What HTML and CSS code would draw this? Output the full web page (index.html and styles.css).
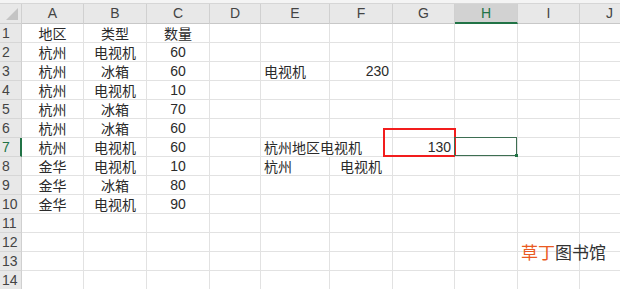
FILE: index.html
```html
<!DOCTYPE html>
<html lang="zh">
<head>
<meta charset="utf-8">
<link rel="stylesheet" href="styles.css">
</head>
<body>
<div class="sheet">
  <div class="topbar"></div>
  <div class="grid">
    <div class="hd corner"><span class="tri"></span></div>
    <div class="hd col">A</div><div class="hd col">B</div><div class="hd col">C</div><div class="hd col">D</div><div class="hd col">E</div><div class="hd col">F</div><div class="hd col">G</div><div class="hd col sel">H</div><div class="hd col">I</div><div class="hd col">J</div>

    <div class="hd row">1</div><div class="c ctr">地区</div><div class="c ctr">类型</div><div class="c ctr">数量</div><div class="c"></div><div class="c"></div><div class="c"></div><div class="c"></div><div class="c"></div><div class="c"></div><div class="c"></div>
    <div class="hd row">2</div><div class="c ctr">杭州</div><div class="c ctr">电视机</div><div class="c ctr num">60</div><div class="c"></div><div class="c"></div><div class="c"></div><div class="c"></div><div class="c"></div><div class="c"></div><div class="c"></div>
    <div class="hd row">3</div><div class="c ctr">杭州</div><div class="c ctr">冰箱</div><div class="c ctr num">60</div><div class="c"></div><div class="c lft">电视机</div><div class="c rgt num">230</div><div class="c"></div><div class="c"></div><div class="c"></div><div class="c"></div>
    <div class="hd row">4</div><div class="c ctr">杭州</div><div class="c ctr">电视机</div><div class="c ctr num">10</div><div class="c"></div><div class="c"></div><div class="c"></div><div class="c"></div><div class="c"></div><div class="c"></div><div class="c"></div>
    <div class="hd row">5</div><div class="c ctr">杭州</div><div class="c ctr">冰箱</div><div class="c ctr num">70</div><div class="c"></div><div class="c"></div><div class="c"></div><div class="c"></div><div class="c"></div><div class="c"></div><div class="c"></div>
    <div class="hd row">6</div><div class="c ctr">杭州</div><div class="c ctr">冰箱</div><div class="c ctr num">60</div><div class="c"></div><div class="c"></div><div class="c"></div><div class="c"></div><div class="c"></div><div class="c"></div><div class="c"></div>
    <div class="hd row rsel">7</div><div class="c ctr">杭州</div><div class="c ctr">电视机</div><div class="c ctr num">60</div><div class="c"></div><div class="c lft over">杭州地区电视机</div><div class="c"></div><div class="c rgt num mark">130<span class="redbox"></span></div><div class="c active"><span class="selbox"><span class="handle"></span></span></div><div class="c"></div><div class="c"></div>
    <div class="hd row">8</div><div class="c ctr">金华</div><div class="c ctr">电视机</div><div class="c ctr num">10</div><div class="c"></div><div class="c lft">杭州</div><div class="c ctr">电视机</div><div class="c"></div><div class="c"></div><div class="c"></div><div class="c"></div>
    <div class="hd row">9</div><div class="c ctr">金华</div><div class="c ctr">冰箱</div><div class="c ctr num">80</div><div class="c"></div><div class="c"></div><div class="c"></div><div class="c"></div><div class="c"></div><div class="c"></div><div class="c"></div>
    <div class="hd row">10</div><div class="c ctr">金华</div><div class="c ctr">电视机</div><div class="c ctr num">90</div><div class="c"></div><div class="c"></div><div class="c"></div><div class="c"></div><div class="c"></div><div class="c"></div><div class="c"></div>
    <div class="hd row">11</div><div class="c"></div><div class="c"></div><div class="c"></div><div class="c"></div><div class="c"></div><div class="c"></div><div class="c"></div><div class="c"></div><div class="c"></div><div class="c"></div>
    <div class="hd row">12</div><div class="c"></div><div class="c"></div><div class="c"></div><div class="c"></div><div class="c"></div><div class="c"></div><div class="c"></div><div class="c"></div><div class="c"></div><div class="c"></div>
    <div class="hd row">13</div><div class="c"></div><div class="c"></div><div class="c"></div><div class="c"></div><div class="c"></div><div class="c"></div><div class="c"></div><div class="c"></div><div class="c"></div><div class="c"></div>
    <div class="hd row">14</div><div class="c"></div><div class="c"></div><div class="c"></div><div class="c"></div><div class="c"></div><div class="c"></div><div class="c"></div><div class="c"></div><div class="c"></div><div class="c"></div>
  </div>
  <div class="watermark"><span class="wm-red">草丁</span>图书馆</div>
</div>
</body>
</html>
```

FILE: styles.css
```css
html, body {
  margin: 0;
  padding: 0;
  background: #ffffff;
}
.sheet {
  position: relative;
  width: 620px;
  height: 289px;
  overflow: hidden;
  font-family: "Noto Sans CJK SC", "Liberation Sans", sans-serif;
  font-size: 14px;
  color: #2b2b2b;
}
.topbar {
  height: 3px;
  background: #f4f4f4;
  border-bottom: 1px solid #d6d6d6;
}
.grid {
  display: grid;
  grid-template-columns: 22px 62px 63px 63px 51px 69px 63px 62px 63px 62px 60px;
  grid-template-rows: 20px;
  grid-auto-rows: 19px;
  width: 640px;
}
.hd {
  box-sizing: border-box;
  background: #e8e8e8;
  color: #444;
  font-family: "Liberation Sans", sans-serif;
  font-size: 14px;
  line-height: 19px;
  border-right: 1px solid #d0d0d0;
  border-bottom: 1px solid #d0d0d0;
}
.corner {
  position: relative;
}
.tri {
  position: absolute;
  right: 3px;
  bottom: 3px;
  width: 0;
  height: 0;
  border-left: 12px solid transparent;
  border-bottom: 12px solid #c4c4c4;
}
.col {
  text-align: center;
  border-bottom: 1px solid #c8c8c8;
}
.col.sel {
  background: #d2d2d2;
  color: #217346;
  border-bottom: 2px solid #217346;
}
.row {
  padding-left: 2px;
  text-align: left;
  border-bottom: 1px solid #d6d6d6;
}
.row.rsel {
  color: #217346;
  border-right: 2px solid #217346;
}
.c {
  box-sizing: border-box;
  border-right: 1px solid #e2e2e2;
  border-bottom: 1px solid #e2e2e2;
  line-height: 19px;
  white-space: nowrap;
  padding: 0 3px;
  position: relative;
}
.ctr { text-align: center; }
.lft { text-align: left; }
.rgt { text-align: right; }
.num {
  font-family: "Liberation Sans", sans-serif;
  font-size: 14px;
}
.over {
  overflow: visible;
  border-right-color: transparent;
  z-index: 1;
}
.redbox {
  position: absolute;
  left: -10px;
  top: -10px;
  right: -2px;
  bottom: -1px;
  border: 2px solid #f21d1d;
  box-sizing: border-box;
}
.selbox {
  position: absolute;
  left: -1px;
  top: -1px;
  right: 0;
  bottom: 0;
  border: 1px solid #3d6e52;
  box-sizing: border-box;
}
.handle {
  position: absolute;
  right: -2px;
  bottom: -2px;
  width: 3px;
  height: 3px;
  background: #217346;
}
.watermark {
  position: absolute;
  left: 521px;
  top: 241px;
  font-size: 17px;
  line-height: 22px;
  color: #333;
  font-family: "Noto Sans CJK SC", sans-serif;
}
.wm-red {
  color: #ea5a22;
}
```
